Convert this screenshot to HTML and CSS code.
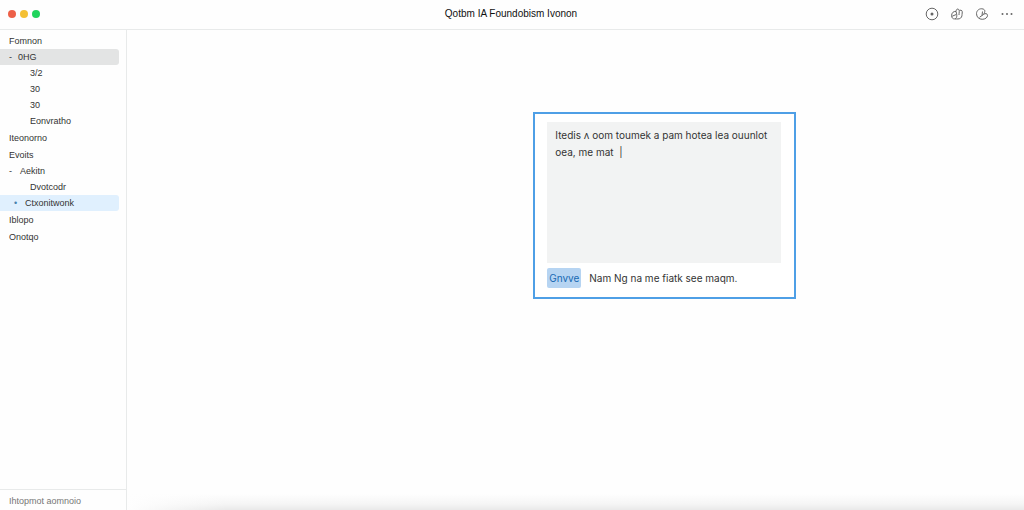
FILE: index.html
```html
<!DOCTYPE html>
<html lang="en">
<head>
<meta charset="utf-8">
<meta name="viewport" content="width=device-width, initial-scale=1">
<title>Qotbm IA Foundobism Ivonon</title>
<link rel="stylesheet" href="styles.css">
</head>
<body>
<header class="titlebar">
  <div class="lights"><span class="light red"></span><span class="light yellow"></span><span class="light green"></span></div>
  <h1 class="title">Qotbm IA Foundobism Ivonon</h1>
  <div class="actions">
    <button class="action" aria-label="Target"><svg viewBox="0 0 14 14"><circle cx="7" cy="7" r="5.8"/><circle cx="7" cy="7" r="1.5" class="solid"/></svg></button>
    <button class="action" aria-label="Share"><svg viewBox="0 0 14 14"><path d="M6 4.500C3.500 4 1.500 6 1.600 8.700C1.700 11 3 12 4.500 11.900C6.800 11.700 7.500 9 6 4.500ZM6 4.500C6 2.500 7.500 1.400 8.600 2.400C9.800 3.600 9 5.500 9 8M9.500 3.300C12 2.700 12.500 4.200 12.200 6C11.900 8 12.300 9.800 10.500 11.200C9 12.200 7.200 12 5 11.900M2.200 9.200L6.500 7.400"/></svg></button>
    <button class="action" aria-label="History"><svg viewBox="0 0 14 14"><path d="M8 2C4.800 1 1.500 3.200 1.500 6.700C1.500 10.200 4.200 12.300 7.200 12.300C10.100 12.300 12.600 10.700 12.500 8.300C12.400 6.400 10.300 6.100 8.700 7.300L4.500 10.300M8 2C10.500 2.700 10.200 5.200 8.500 7.300M7.500 4.500L7 8.500"/></svg></button>
    <button class="action" aria-label="More"><svg viewBox="0 0 14 14"><g class="solid"><circle cx="2.500" cy="7" r="1"/><circle cx="7" cy="7" r="1"/><circle cx="11.500" cy="7" r="1"/></g></svg></button>
  </div>
</header>
<div class="workspace">
  <aside class="sidebar">
    <nav class="tree" aria-label="Pages">
      <a class="row top" href="#">Fomnon</a>
      <a class="row current" href="#"><span class="mark">-</span>0HG</a>
      <a class="row child" href="#">3/2</a>
      <a class="row child" href="#">30</a>
      <a class="row child" href="#">30</a>
      <a class="row child" href="#">Eonvratho</a>
      <a class="row top" href="#">Iteonorno</a>
      <a class="row top" href="#">Evoits</a>
      <a class="row branch" href="#"><span class="mark">-</span>Aekitn</a>
      <a class="row child" href="#">Dvotcodr</a>
      <a class="row selected" href="#"><span class="mark">•</span>Ctxonitwonk</a>
      <a class="row top" href="#">Iblopo</a>
      <a class="row top" href="#">Onotqo</a>
    </nav>
    <footer class="status">Ihtopmot aomnoio</footer>
  </aside>
  <main class="canvas">
    <form class="card">
      <textarea class="note" aria-label="Note" spellcheck="false">Itedis ʌ oom toumek a pam hotea lea ouunlot
oea, me mat  |</textarea>
      <div class="footer">
        <button class="create" type="button">Gnvve</button>
        <span>Nam Ng na me fiatk see maqm.</span>
      </div>
    </form>
  </main>
</div>
</body>
</html>
```
FILE: styles.css
```css
* { box-sizing: border-box; }
body {
  margin: 0;
  min-height: 100vh;
  display: flex;
  flex-direction: column;
  background: #fefefe;
  color: #333;
  font-family: "Liberation Sans", Arial, sans-serif;
  font-size: 9px;
}
button, textarea { font: inherit; color: inherit; border: 0; }
.titlebar {
  height: 30px;
  display: grid;
  grid-template-columns: 1fr auto 1fr;
  align-items: center;
  padding: 0 10px 2px 8px;
  border-bottom: 1px solid #e8eaea;
}
.lights { display: flex; gap: 4px; }
.light { width: 8px; height: 8px; border-radius: 50%; }
.red { background: #ed6048; }
.yellow { background: #f4c034; }
.green { background: #20d45c; }
.title { margin: 0; font-size: 10px; line-height: 14px; font-weight: 500; color: #111; }
.actions { display: flex; justify-content: flex-end; gap: 11px; }
.action { width: 14px; height: 14px; padding: 0; background: none; }
.action svg { display: block; width: 14px; height: 14px; fill: none; stroke: #666; stroke-width: 1; }
.action .solid { fill: #666; stroke: none; }
.workspace { flex: 1; display: flex; }
.sidebar {
  flex: none;
  width: 127px;
  display: flex;
  flex-direction: column;
  border-right: 1px solid #e8eaea;
}
.tree { flex: 1; padding: 3px 7px 0 0; }
.row {
  display: flex;
  height: 16px;
  padding-left: 9px;
  line-height: 16px;
  border-radius: 0 3px 3px 0;
  color: inherit;
  text-decoration: none;
}
.child + .top, .top + .top, .selected + .top { margin-top: 1px; }
.mark { width: 9px; }
.child { padding-left: 30px; }
.branch .mark { width: 11px; }
.current { background: #e3e4e4; }
.selected { padding-left: 14px; background: #e0f0fe; }
.selected .mark { width: 11px; color: #4682ad; }
.status {
  height: 21px;
  padding: 2px 9px;
  border-top: 1px solid #e8eaea;
  line-height: 18px;
  color: #777;
}
.canvas {
  flex: 1;
  padding-top: 82px;
  background:
    linear-gradient(to right, #fefefe, transparent 100px),
    linear-gradient(to top, #e9e9e9, #f5f5f5 6px, #fefefe 16px);
}
.card {
  width: 263px;
  margin-left: 45.3%;
  padding: 8px 13px 9px 12px;
  border: 2px solid #4e9fe6;
  background: #fff;
  font-family: Inter, "Liberation Sans", sans-serif;
  font-size: 10px;
}
.note {
  display: block;
  width: 100%;
  height: 141px;
  padding: 5px 8px;
  background: #f2f3f3;
  line-height: 17px;
  resize: none;
  outline: 0;
  overflow: hidden;
}
.footer { display: flex; align-items: center; gap: 8px; margin-top: 5px; }
.create { width: 34px; height: 20px; padding: 0; border-radius: 2px; background: #b6d4f2; color: #1769b3; }
```
